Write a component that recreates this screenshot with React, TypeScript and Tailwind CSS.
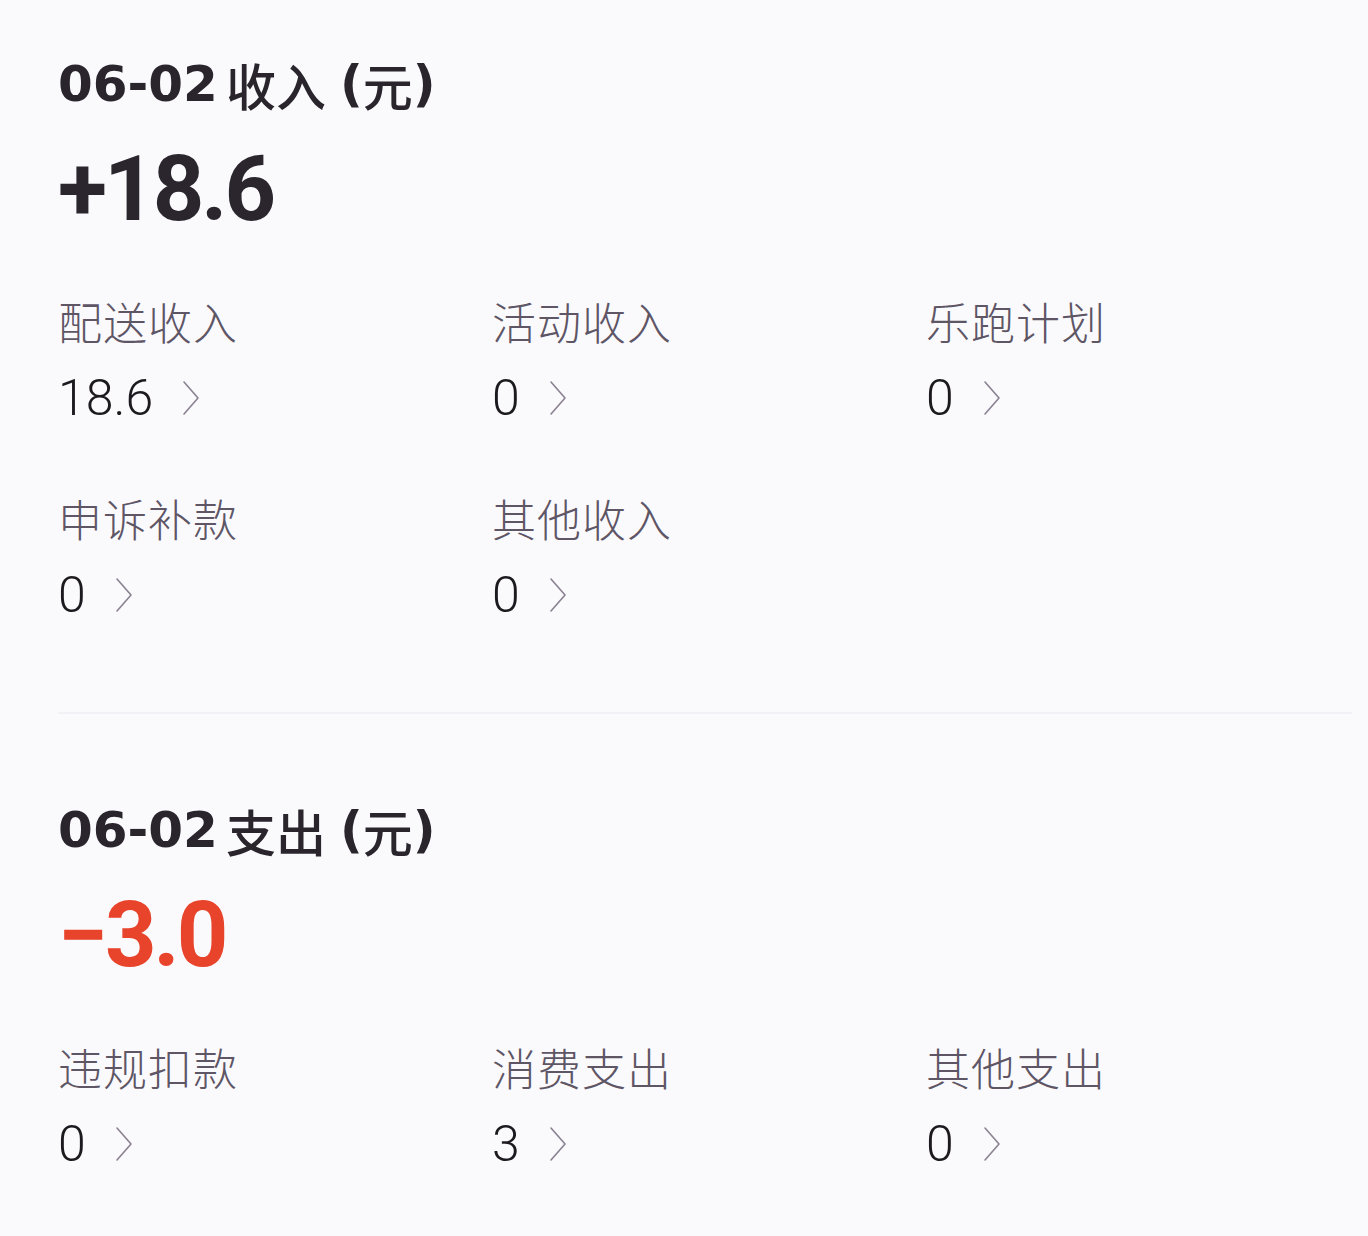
import React from 'react';

type Item = { label: string; value: string };

const INCOME: Item[] = [
  { label: '配送收入', value: '18.6' },
  { label: '活动收入', value: '0' },
  { label: '乐跑计划', value: '0' },
  { label: '申诉补款', value: '0' },
  { label: '其他收入', value: '0' },
];

const EXPENSE: Item[] = [
  { label: '违规扣款', value: '0' },
  { label: '消费支出', value: '3' },
  { label: '其他支出', value: '0' },
];

const CJK = "font-['Noto_Sans_CJK_SC','Noto_Sans',sans-serif]";
const LATIN = "font-['DejaVu_Sans',sans-serif]";

const Chevron = () => (
  <svg width="20" height="36" viewBox="0 0 20 36" fill="none" stroke="#8a8191" strokeWidth="1.6" strokeLinecap="round" strokeLinejoin="round">
    <polyline points="3 2 17 18 3 34" />
  </svg>
);

const Cell: React.FC<{ item: Item }> = ({ item }) => (
  <div className="flex flex-col">
    <p className={`${CJK} text-[44px] leading-[50px] font-light text-[#5e5565] tracking-[1px]`}>{item.label}</p>
    <div className="flex items-center gap-[28px] mt-[24px] h-[56px]">
      <span className="font-['Roboto',sans-serif] font-light text-[50px] leading-[56px] text-[#1c1a1f]">{item.value}</span>
      <Chevron />
    </div>
  </div>
);

const Section: React.FC<{ date: string; title: string; total: string; red?: boolean; items: Item[] }> = ({
  date,
  title,
  total,
  red,
  items,
}) => (
  <div className="flex flex-col">
    <h2 className={`${CJK} text-[50px] leading-[60px] font-bold text-[#2a252d] flex items-center`}>
      <span className={LATIN}>{date}</span>
      <span className="ml-[8px] font-medium">{title}</span>
      <span className="ml-[14px] flex items-center">
        <span className={LATIN}>(</span>
        <span className="font-medium">元</span>
        <span className={LATIN}>)</span>
      </span>
    </h2>
    <p
      className={`font-['Roboto',sans-serif] font-bold text-[90px] leading-[100px] tracking-[-3px] mt-[26px] ${
        red ? 'text-[#e8432b]' : 'text-[#2b262e]'
      }`}
    >
      {total}
    </p>
    <div className="grid grid-cols-3 gap-y-[67px] mt-[56px]">
      {items.map((it) => (
        <Cell key={it.label} item={it} />
      ))}
    </div>
  </div>
);

export default function App() {
  return (
    <div className="w-[1368px] h-[1236px] bg-[#fafafd] overflow-hidden">
      <div className="pl-[58px] pr-[8px] pt-[54px]">
        <Section date="06-02" title="收入" total="+18.6" items={INCOME} />
        <div className="h-[2px] bg-[#f1f1f6] mt-[89px] mr-[8px]" />
        <div className="mt-[86px]">
          <Section date="06-02" title="支出" total="−3.0" red items={EXPENSE} />
        </div>
      </div>
    </div>
  );
}
